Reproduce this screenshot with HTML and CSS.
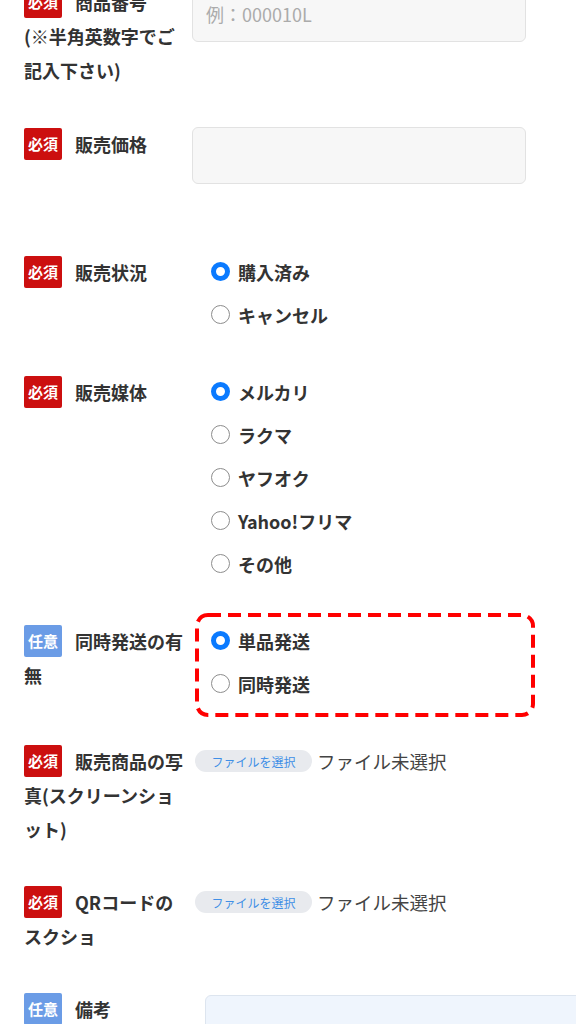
FILE: index.html
```html
<!DOCTYPE html>
<html lang="ja">
<head>
<meta charset="utf-8">
<title>販売登録フォーム</title>
<link rel="stylesheet" href="styles.css">
</head>
<body>
<form class="form">
  <div class="row row--first">
    <div class="label"><span class="badge badge--req">必須</span>商品番号<br>(※半角英数字でご記入下さい)</div>
    <div class="field"><div class="input"><span class="placeholder">例：000010L</span></div></div>
  </div>

  <div class="row row--spaced">
    <div class="label"><span class="badge badge--req">必須</span>販売価格</div>
    <div class="field"><div class="input"></div></div>
  </div>

  <div class="row">
    <div class="label"><span class="badge badge--req">必須</span>販売状況</div>
    <div class="field">
      <div class="radios">
        <label class="radio"><span class="dot dot--on"></span>購入済み</label>
        <label class="radio"><span class="dot"></span>キャンセル</label>
      </div>
    </div>
  </div>

  <div class="row">
    <div class="label"><span class="badge badge--req">必須</span>販売媒体</div>
    <div class="field">
      <div class="radios">
        <label class="radio"><span class="dot dot--on"></span>メルカリ</label>
        <label class="radio"><span class="dot"></span>ラクマ</label>
        <label class="radio"><span class="dot"></span>ヤフオク</label>
        <label class="radio"><span class="dot"></span>Yahoo!フリマ</label>
        <label class="radio"><span class="dot"></span>その他</label>
      </div>
    </div>
  </div>

  <div class="row">
    <div class="label"><span class="badge badge--opt">任意</span>同時発送の有無</div>
    <div class="field field--marked">
      <div class="radios">
        <label class="radio"><span class="dot dot--on"></span>単品発送</label>
        <label class="radio"><span class="dot"></span>同時発送</label>
      </div>
      <svg class="mark" width="340" height="104" viewBox="0 0 340 104" aria-hidden="true">
        <rect x="2" y="2" width="336" height="100" rx="11" ry="11" fill="none" stroke="#ff0000" stroke-width="4" stroke-dasharray="13 7"/>
      </svg>
    </div>
  </div>

  <div class="row">
    <div class="label"><span class="badge badge--req">必須</span>販売商品の写真(スクリーンショット)</div>
    <div class="field"><div class="file"><span class="file-btn">ファイルを選択</span><span class="file-name">ファイル未選択</span></div></div>
  </div>

  <div class="row">
    <div class="label"><span class="badge badge--req">必須</span>QRコードのスクショ</div>
    <div class="field"><div class="file"><span class="file-btn">ファイルを選択</span><span class="file-name">ファイル未選択</span></div></div>
  </div>

  <div class="row">
    <div class="label"><span class="badge badge--opt">任意</span>備考</div>
    <div class="field"><div class="textarea"></div></div>
  </div>
</form>
</body>
</html>
```

FILE: styles.css
```css
html, body {
  margin: 0;
  padding: 0;
  background: #ffffff;
  overflow: hidden;
}

body {
  width: 576px;
  height: 1024px;
  font-family: "Noto Sans CJK JP", "Noto Sans", sans-serif;
  color: #333333;
}

.form {
  padding-left: 24px;
}

.row {
  display: grid;
  grid-template-columns: 168px 1fr;
  align-items: start;
  margin-bottom: 39px;
}

.row--first {
  margin-top: -15px;
  margin-bottom: 40px;
}

.row--spaced {
  margin-bottom: 71px;
}

.label {
  width: 165px;
  font-size: 18px;
  font-weight: 700;
  line-height: 34px;
  color: #333333;
  line-break: loose;
}

.badge {
  display: inline-block;
  width: 38px;
  height: 32px;
  line-height: 32px;
  margin-right: 13px;
  border-radius: 2px;
  color: #ffffff;
  font-size: 15px;
  font-weight: 700;
  text-align: center;
  vertical-align: top;
  position: relative;
  top: 1px;
}

.badge--req {
  background: #cc0f0f;
}

.badge--opt {
  background: #6b9ce6;
}

.field {
  min-width: 0;
}

.field--marked {
  position: relative;
}

.input {
  width: 334px;
  height: 57px;
  box-sizing: border-box;
  background: #f7f7f7;
  border: 1px solid #e2e2e2;
  border-radius: 6px;
  display: flex;
  align-items: center;
  padding-left: 13px;
}

.placeholder {
  color: #ababab;
  font-size: 18px;
}

.radios {
  display: flex;
  flex-direction: column;
  margin-top: -5px;
  padding-left: 19px;
}

.radio {
  display: flex;
  align-items: center;
  gap: 8px;
  height: 43px;
  font-size: 18px;
  font-weight: 700;
  color: #333333;
}

.dot {
  width: 19px;
  height: 19px;
  box-sizing: border-box;
  border-radius: 50%;
  border: 1.5px solid #8d8d8d;
  background: #ffffff;
  flex: none;
}

.dot--on {
  border: 5.5px solid #0a7aff;
}

.mark {
  position: absolute;
  left: 3px;
  top: -11px;
  display: block;
}

.file {
  display: flex;
  align-items: center;
  height: 34px;
  margin-left: 3px;
}

.file-btn {
  display: inline-flex;
  align-items: center;
  justify-content: center;
  width: 117px;
  height: 22px;
  border-radius: 11px;
  background: #e8eaee;
  color: #3f8fe6;
  font-size: 12px;
}

.file-name {
  margin-left: 5px;
  font-size: 18.5px;
  color: #444444;
}

.textarea {
  margin-left: 13px;
  margin-top: 3px;
  width: 400px;
  height: 80px;
  box-sizing: border-box;
  background: #eff5fd;
  border: 1px solid #dde5ef;
  border-radius: 6px;
}
```
